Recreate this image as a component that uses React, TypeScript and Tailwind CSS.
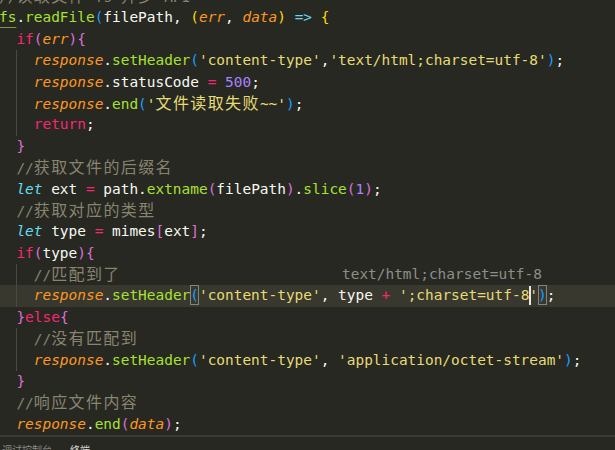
import React from "react";

type Tok = [string, string?];

const W = "text-[#f8f8f2]";
const G = "text-[#a6e22e]";
const O = "text-[#fd971f] italic";
const Y = "text-[#e6db74]";
const P = "text-[#ae81ff]";
const K = "text-[#f92672]";
const C = "text-[#66d9ef]";
const CI = "text-[#66d9ef] italic";
const CM = "text-[#88846f]";
const B1 = "text-[#ffd700]";
const B2 = "text-[#da70d6]";
const B3 = "text-[#179fff]";
const BOX = "inline-block h-[20px] leading-[20px] align-top shadow-[inset_0_0_0_1px_#858579]";

const lines: { toks: Tok[]; guide?: boolean; active?: boolean; ghost?: boolean }[] = [
  { toks: [["//读取文件 fs 异步 API", CM]] },
  {
    toks: [
      ["fs", G + " underline decoration-[#8f8f4a] underline-offset-[5px]"],
      ["."],
      ["readFile", G],
      ["(", B3],
      ["filePath, "],
      ["(", B1],
      ["err", O],
      [", "],
      ["data", O],
      [")", B1],
      [" "],
      ["=>", C],
      [" "],
      ["{", B1],
    ],
  },
  { toks: [["  "], ["if", K], ["(", B2], ["err", O], [")", B2], ["{", B2]] },
  {
    guide: true,
    toks: [
      ["    "],
      ["response", O],
      ["."],
      ["setHeader", G],
      ["(", B3],
      ["'content-type'", Y],
      [","],
      ["'text/html;charset=utf-8'", Y],
      [")", B3],
      [";"],
    ],
  },
  {
    guide: true,
    toks: [["    "], ["response", O], [".statusCode "], ["=", K], [" "], ["500", P], [";"]],
  },
  {
    guide: true,
    toks: [["    "], ["response", O], ["."], ["end", G], ["(", B3], ["'文件读取失败~~'", Y], [")", B3], [";"]],
  },
  { guide: true, toks: [["    "], ["return", K], [";"]] },
  { toks: [["  "], ["}", B2]] },
  { toks: [["  "], ["//获取文件的后缀名", CM]] },
  {
    toks: [
      ["  "],
      ["let", CI],
      [" ext "],
      ["=", K],
      [" path."],
      ["extname", G],
      ["(", B2],
      ["filePath"],
      [")", B2],
      ["."],
      ["slice", G],
      ["(", B2],
      ["1", P],
      [")", B2],
      [";"],
    ],
  },
  { toks: [["  "], ["//获取对应的类型", CM]] },
  { toks: [["  "], ["let", CI], [" type "], ["=", K], [" mimes"], ["[", B2], ["ext"], ["]", B2], [";"]] },
  { toks: [["  "], ["if", K], ["(", B2], ["type"], [")", B2], ["{", B2]] },
  { guide: true, ghost: true, toks: [["    "], ["//匹配到了", CM]] },
  {
    guide: true,
    active: true,
    toks: [
      ["    "],
      ["response", O],
      ["."],
      ["setHeader", G],
      ["(", B3 + " " + BOX],
      ["'content-type'", Y],
      [", type "],
      ["+", K],
      [" "],
      ["';charset=utf-8'", Y],
      [")", B3 + " " + BOX],
      [";"],
    ],
  },
  { toks: [["  "], ["}", B2], ["else", K], ["{", B2]] },
  { guide: true, toks: [["    "], ["//没有匹配到", CM]] },
  {
    guide: true,
    toks: [
      ["    "],
      ["response", O],
      ["."],
      ["setHeader", G],
      ["(", B3],
      ["'content-type'", Y],
      [", "],
      ["'application/octet-stream'", Y],
      [")", B3],
      [";"],
    ],
  },
  { toks: [["  "], ["}", B2]] },
  { toks: [["  "], ["//响应文件内容", CM]] },
  { toks: [["  "], ["response", O], ["."], ["end", G], ["(", B2], ["data", O], [")", B2], [";"]] },
];

function renderText(text: string) {
  const parts = text.split(/([\u3000-\u9fff\uff00-\uffef]+)/);
  return parts.map((p, i) =>
    /[\u3000-\u9fff\uff00-\uffef]/.test(p) ? (
      <span key={i} className="text-[16px] tracking-[1.4px]">
        {p}
      </span>
    ) : (
      <React.Fragment key={i}>{p}</React.Fragment>
    )
  );
}

export default function App() {
  return (
    <div className="w-[615px] h-[450px] overflow-hidden bg-[#272822] flex flex-col font-['DejaVu_Sans_Mono','Noto_Sans_CJK_SC',monospace] text-[14.45px]">
      <div className="mt-[-14px] ml-[-1px] flex flex-col">
        {lines.map((ln, i) => (
          <div
            key={i}
            className={
              "relative h-[21.4px] leading-[21.4px] whitespace-pre text-[#f8f8f2] " +
              (ln.active ? "bg-[#38382f]" : "")
            }
          >
            {ln.guide && <div className="absolute left-[17px] top-0 bottom-0 w-px bg-[#4a4a42]" />}
            {ln.toks.map(([t, c], j) => (
              <span key={j} className={c ?? W}>
                {renderText(t)}
              </span>
            ))}
            {ln.ghost && (
              <span className="absolute left-[343px] top-0 text-[#8e8e88]">text/html;charset=utf-8</span>
            )}
            {ln.active && (
              <div className="absolute left-[530px] top-[1px] w-[2px] h-[19px] bg-[#e8e8e0]" />
            )}
          </div>
        ))}
      </div>
      <div className="border-t-2 border-[#3a3a34] flex gap-[18px] pl-[2px] pt-[7px] text-[10px] leading-[12px] font-['Noto_Sans_CJK_SC',sans-serif]">
        <span className="text-[#8a8a85]">调试控制台</span>
        <span className="text-[#d8d8d2]">终端</span>
      </div>
    </div>
  );
}
